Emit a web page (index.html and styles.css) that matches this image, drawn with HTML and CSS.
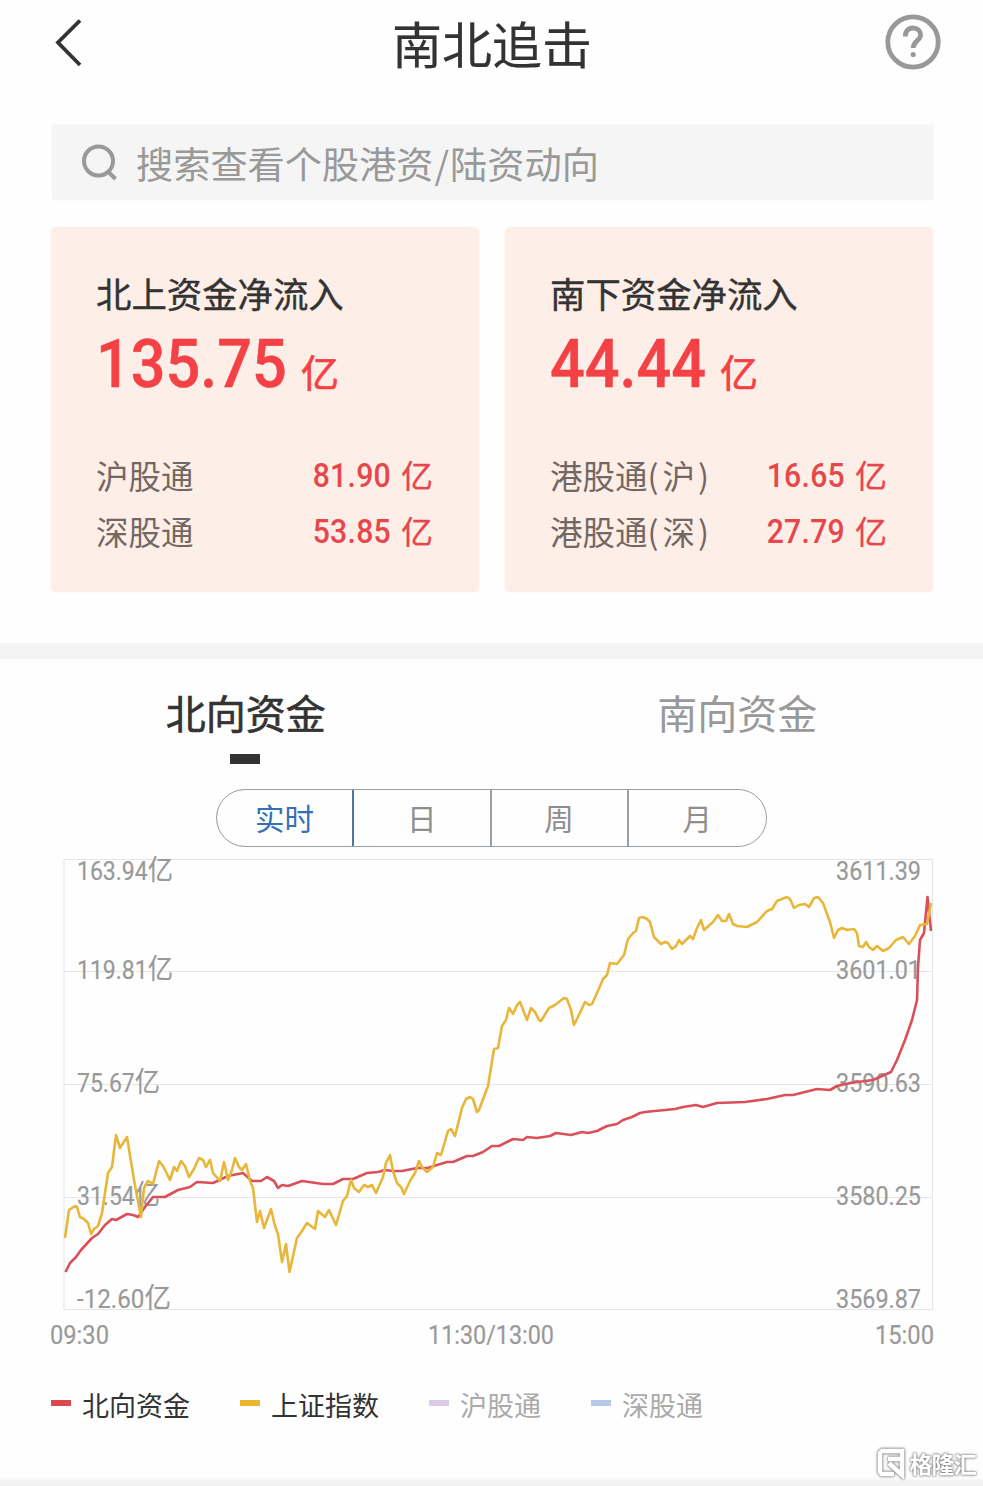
FILE: index.html
```html
<!DOCTYPE html>
<html lang="zh-CN">
<head>
<meta charset="utf-8">
<title>南北追击</title>
<link rel="stylesheet" href="styles.css">
</head>
<body>
<div class="page">
  <header class="header">
    <svg class="back" width="30" height="50" viewBox="0 0 30 50"><path d="M27 2.500L5 24.500L27 47"/></svg>
    <h1 class="title">南北追击</h1>
    <svg class="help" width="56" height="56" viewBox="0 0 56 56">
      <circle cx="28" cy="28" r="25.200"/>
      <path d="M20.300 22.500C20.300 17 23.500 14 28 14C32.600 14 35.600 17 35.600 21C35.600 26.500 28.200 27 28.200 34"/>
      <circle class="dot" cx="28.200" cy="40.500" r="2.600"/>
    </svg>
  </header>

  <div class="search">
    <svg class="search-icon" width="38" height="38" viewBox="0 0 38 38"><circle cx="17.500" cy="17" r="14.500"/><path d="M28 28.500L34.500 35"/></svg>
    <span class="placeholder">搜索查看个股港资<i>/</i>陆资动向</span>
  </div>

  <section class="cards">
    <article class="card">
      <h2 class="card-title">北上资金净流入</h2>
      <div class="total"><span class="total-num num-135">135.75</span><span class="total-unit">亿</span></div>
      <div class="row"><span class="label">沪股通</span><span class="value"><span class="num">81.90</span><span>亿</span></span></div>
      <div class="row"><span class="label">深股通</span><span class="value"><span class="num">53.85</span><span>亿</span></span></div>
    </article>
    <article class="card card-south">
      <h2 class="card-title">南下资金净流入</h2>
      <div class="total"><span class="total-num num-44">44.44</span><span class="total-unit">亿</span></div>
      <div class="row"><span class="label">港股通<i>(</i>沪<i>)</i></span><span class="value"><span class="num">16.65</span><span>亿</span></span></div>
      <div class="row"><span class="label">港股通<i>(</i>深<i>)</i></span><span class="value"><span class="num">27.79</span><span>亿</span></span></div>
    </article>
  </section>

  <div class="divider"></div>

  <nav class="tabs">
    <div class="tab active">北向资金</div>
    <div class="tab">南向资金</div>
  </nav>

  <div class="segments">
    <div class="segment on">实时</div>
    <div class="segment">日</div>
    <div class="segment">周</div>
    <div class="segment">月</div>
  </div>

  <svg class="chart" width="983" height="504" viewBox="0 850 983 504">
    <g class="grid">
      <path d="M64 859.500H932.500V1309.500H64Z"/>
      <path d="M64 971.500H932M64 1084.500H932M64 1197.500H932"/>
    </g>
    <g class="axis">
      <text x="77" y="879.500" textLength="96" lengthAdjust="spacingAndGlyphs">163.94<tspan class="yi">亿</tspan></text>
      <text x="77" y="978.500" textLength="96" lengthAdjust="spacingAndGlyphs">119.81<tspan class="yi">亿</tspan></text>
      <text x="77" y="1091.500" textLength="83" lengthAdjust="spacingAndGlyphs">75.67<tspan class="yi">亿</tspan></text>
      <text x="77" y="1204.500" textLength="83" lengthAdjust="spacingAndGlyphs">31.54<tspan class="yi">亿</tspan></text>
      <text x="77" y="1307.500" textLength="94" lengthAdjust="spacingAndGlyphs">-12.60<tspan class="yi">亿</tspan></text>
      <text x="836" y="879.500" textLength="85" lengthAdjust="spacingAndGlyphs">3611.39</text>
      <text x="836" y="978.500" textLength="85" lengthAdjust="spacingAndGlyphs">3601.01</text>
      <text x="836" y="1091.500" textLength="85" lengthAdjust="spacingAndGlyphs">3590.63</text>
      <text x="836" y="1204.500" textLength="85" lengthAdjust="spacingAndGlyphs">3580.25</text>
      <text x="836" y="1307.500" textLength="85" lengthAdjust="spacingAndGlyphs">3569.87</text>
      <text x="50" y="1344" textLength="59" lengthAdjust="spacingAndGlyphs">09:30</text>
      <text x="428" y="1344" textLength="126" lengthAdjust="spacingAndGlyphs">11:30/13:00</text>
      <text x="875" y="1344" textLength="59" lengthAdjust="spacingAndGlyphs">15:00</text>
    </g>
    <polyline class="line north" points="65.500,1272 70,1263 76,1257 81,1250 92,1238 98,1234 105,1225 112,1219 116,1220 127,1214 133,1215 138,1217 145,1207 153,1197 165,1197 178,1190 190,1187 197,1182 213,1183 228,1176 243,1173 252,1181 261,1181 267,1177 274,1181 278,1188 282,1185 288,1186 302,1181 323,1184 333,1184 343,1179 353,1179 367,1173 378,1172 385,1170 393,1171 402,1171 417,1168 428,1168 437,1165 447,1162 453,1162 467,1156 473,1156 483,1152 492,1146 499,1146 513,1139 523,1140 527,1137 537,1138 550,1136 556,1133 571,1135 582,1132 588,1133 597,1131 607,1126 617,1124 623,1120 632,1117 640,1113 645,1112 675,1109 683,1107 696,1105 703,1107 717,1103 745,1102 767,1099 785,1095 793,1095 817,1089 830,1090 837,1086 850,1083 873,1080 891,1072 897,1060 905,1040 912,1020 917,1000 918,967 920,940 924,933 927.500,897 931,931"/>
    <polyline class="line index" points="65,1238 69,1210 75,1206 77,1207 80,1217 84,1219 88,1223 91,1234 94,1229 98,1226 102,1213 108,1173 112,1167 116,1135 120,1148 127,1137 134,1180 141,1217 144,1188 148,1181 153,1184 159,1161 163,1166 170,1180 174,1167 177,1171 181,1161 185,1166 189,1177 194,1169 199,1158 203,1160 206,1167 210,1160 213,1173 220,1181 224,1162 228,1180 232,1170 235,1158 239,1167 242,1170 246,1164 250,1181 253,1188 257,1222 260,1211 264,1228 271,1209 275,1226 278,1234 282,1262 286,1244 289.500,1272 297,1238 302,1231 307,1223 315,1229 318,1211 325,1217 329,1210 336,1225 343,1201 347,1196 351,1180 354,1188 359,1192 364,1185 368,1187 372,1185 376,1193 383,1177 386,1163 390,1155 393,1171 397,1183 401,1187 404,1194 410,1181 415,1173 419,1161 422,1167 427,1172 433,1167 437,1153 441,1155 448,1131 451,1129 455,1136 462,1108 466,1099 470,1097 473,1099 477,1112 479,1110 488,1086 494,1049 498,1048 502,1026 506,1020 509,1008 513,1014 517,1005 520,1002 527,1020 531,1008 535,1012 539,1020 541,1021 549,1008 555,1005 564,998 567,999 571,1010 574,1025 578,1017 585,1002 589,1005 592,1004 597,993 603,979 607,975 610,963 617,964 624,955 628,939 633,933 636,931 639,918 643,917 647,919 650,922 654,937 661,944 665,942 668,943 672,949 676,946 679,940 682,944 690,936 693,939 697,928 701,920 704,930 713,922 718,915 722,921 726,921 729,914 733,924 737,926 747,927 757,922 767,911 772,909 777,901 787,897 790,899 794,908 799,905 805,904 809,907 814,898 818,897 823,903 830,922 834,938 838,930 842,928 847,930 854,929 857,933 859,946 863,947 866,942 869,947 873,950 877,946 883,951 889,948 896,940 903,937 909,944 915,936 920,925 927,924 931,903"/>
  </svg>

  <div class="legend">
    <div class="key k-north">北向资金</div>
    <div class="key k-index">上证指数</div>
    <div class="key k-sh off">沪股通</div>
    <div class="key k-sz off">深股通</div>
  </div>

  <footer class="footer">
    <div class="brand">
      <svg width="32" height="32" viewBox="0 0 32 32"><path d="M26 10V4H6L4 6V25L6 27H18M12 12H26V28L13 16"/></svg>
      <span>格隆汇</span>
    </div>
  </footer>
</div>
</body>
</html>
```
FILE: styles.css
```css
* { box-sizing: border-box; }
body {
  margin: 0;
  background: #fefefe;
  color: #333;
  font-family: "Noto Sans CJK SC", sans-serif;
}
.page {
  width: 983px;
  height: 1486px;
  display: flex;
  flex-direction: column;
  overflow: hidden;
}
.header {
  height: 125px;
  padding: 14px 42px 0 53px;
  display: flex;
  justify-content: space-between;
  align-items: flex-start;
}
.back { margin-top: 4px; fill: none; stroke: #333; stroke-width: 3.8; }
.title { margin: -7px 0 0 16px; font-size: 50px; line-height: 70px; font-weight: 400; -webkit-text-stroke: .2px; }
.help { fill: none; stroke: #999; stroke-width: 4.8; }
.help .dot { fill: #999; stroke: none; }

.search {
  height: 75px;
  margin: 0 50px 0 52px;
  padding-left: 29px;
  display: flex;
  align-items: center;
  gap: 17px;
  background: #f5f5f5;
  border-radius: 4px 0 0 4px;
  box-shadow: 0 0 3px #f5f5f5;
  color: #999;
  font-size: 37.200px;
}
.search-icon { fill: none; stroke: #999; stroke-width: 4; }
.placeholder { line-height: 75px; padding-top: 2px; }
.placeholder i { font-style: normal; padding: 0 1px; }

.cards {
  margin: 27px 50px 0 51px;
  display: grid;
  grid-template-columns: 428px 428px;
  justify-content: space-between;
}
.card {
  height: 365px;
  padding: 39px 46px 0 45px;
  background: #feeee8;
  border-radius: 6px;
  box-shadow: 0 0 3px #feeeec;
}
.card-title { margin: 0; font-size: 35.400px; line-height: 54px; font-weight: 400; -webkit-text-stroke: .4px; }
.total {
  height: 86px;
  margin-bottom: 41px;
  display: flex;
  align-items: baseline;
  color: #f34145;
  line-height: 88px;
}
.total-num {
  font-family: Roboto, sans-serif;
  font-size: 66.500px;
  font-weight: 500;
  transform: scaleX(.92);
  transform-origin: left;
  -webkit-text-stroke: .5px;
}
.num-135 { width: 205px; }
.num-44 { width: 170px; }
.total-unit { font-size: 38px; font-weight: 400; -webkit-text-stroke: .7px; }
.row { height: 56.500px; display: flex; justify-content: space-between; align-items: center; }
.label { margin-top: -2px; font-size: 32.500px; color: #736762; }
.label i { display: inline-block; width: 15px; font-style: normal; }
.label i:last-child { text-indent: 3px; }
.value { display: flex; align-items: baseline; gap: 11px; color: #e5474b; font-size: 32px; line-height: 48px; -webkit-text-stroke: .3px; }
.num {
  font-family: Roboto, sans-serif;
  font-size: 33.500px;
  font-weight: 500;
  letter-spacing: .3px;
  transform: translate(1px, -1px) scaleX(.9);
  transform-origin: right;
  -webkit-text-stroke: 0;
}

.divider { height: 16px; margin-top: 51px; background: #f4f4f4; flex: none; }

.tabs { height: 130px; display: grid; grid-template-columns: 1fr 1fr; flex: none; }
.tab {
  display: flex;
  flex-direction: column;
  align-items: center;
  padding-top: 24px;
  font-size: 40px;
  line-height: 58px;
  color: #999;
}
.tab.active { color: #333; -webkit-text-stroke: .6px; }
.tab.active::after { content: ""; width: 30px; height: 10px; margin: 13px 1px 0 0; background: #333; }

.segments {
  width: 551px;
  height: 58px;
  margin: 0 auto;
  flex: none;
  display: grid;
  grid-template-columns: repeat(4, 1fr);
  border: 1px solid #999fa6;
  border-radius: 29px;
  overflow: hidden;
}
.segment {
  text-align: center;
  font-size: 29.500px;
  line-height: 55px;
  color: #8e8e8e;
  border-right: 2px solid #999fa6;
}
.segment:last-child { border-right: 0; }
.segment.on {
  color: #3470b8;
  border: 1px solid #4f75a0;
  border-right-width: 2px;
  border-radius: 28px 0 0 28px;
  margin: -1px 0 -1px -1px;
}

.chart { display: block; flex: none; margin-top: 3px; }
.grid path { fill: none; stroke: #e6e6e6; stroke-width: 1.2; }
.axis text { font-family: Roboto, sans-serif; font-size: 25.500px; fill: #999; stroke: #999; stroke-width: .2; }
.axis .yi { font-family: "Noto Sans CJK SC", sans-serif; font-size: 28px; }
.line { fill: none; stroke-width: 2.6; stroke-linejoin: round; }
.north { stroke: #d9505a; }
.index { stroke: #e8b73a; }

.legend { display: flex; height: 100px; padding-left: 51px; flex: none; }
.key { display: flex; align-items: center; gap: 11px; height: 100px; font-size: 27px; }
.key::before { content: ""; width: 20px; height: 6px; margin-top: -3px; background: currentColor; }
.k-north { width: 189px; }
.k-index { width: 189px; }
.k-sh { width: 162px; }
.k-north::before { background: #d94a50; }
.k-index::before { background: #eab530; }
.k-sh::before { background: #dccaea; }
.k-sz::before { background: #b5c9ea; }
.off { color: #aaa; }

.footer {
  height: 32px;
  padding-right: 7px;
  display: flex;
  justify-content: flex-end;
  flex: none;
  background: linear-gradient(#fefefe 23px, #f2f2f2 28px);
}
.brand {
  height: 32px;
  margin-top: -7px;
  display: flex;
  gap: 1px;
  align-items: center;
  color: #fff;
  font-size: 23px;
  font-weight: 700;
  line-height: 32px;
  filter: drop-shadow(0 0 1px #777) drop-shadow(0 0 1px #aaa);
}
.brand svg { fill: none; stroke: #fff; stroke-width: 4.500; }
.brand span { letter-spacing: -.8px; }
```
